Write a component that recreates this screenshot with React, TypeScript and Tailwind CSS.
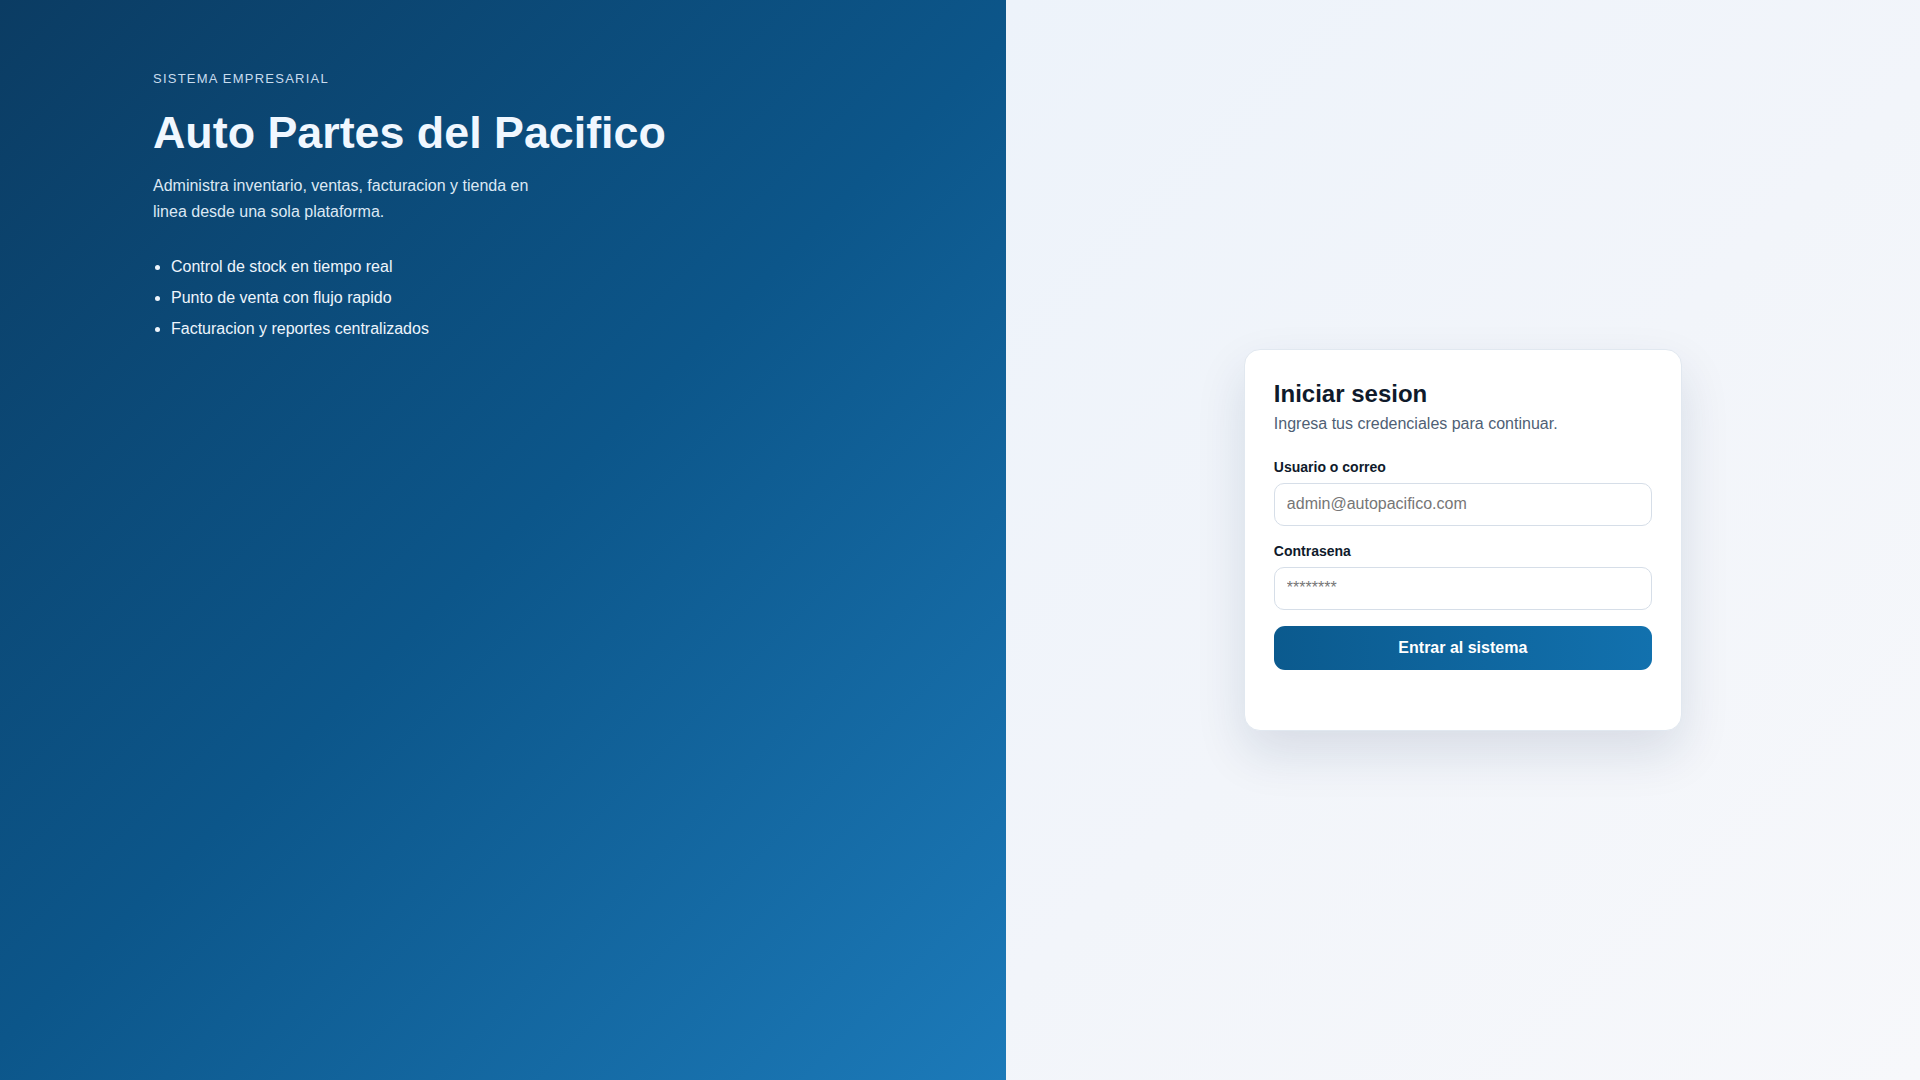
import React from "react";

export default function App() {
  return (
    <div
      className="grid grid-cols-[1.1fr_1fr] w-full h-[1080px] min-h-screen"
      style={{ fontFamily: '"Liberation Sans", Arial, sans-serif' }}
    >
      <section className="bg-[linear-gradient(135deg,#0b3c63_0%,#0c568a_50%,#1c7ab9_100%)] text-white pl-[153px] pr-12 pt-[71px]">
        <p className="text-[13px] leading-[16px] tracking-[0.095em] uppercase text-[#c9dcee]">
          Sistema empresarial
        </p>
        <h1 className="mt-[21px] text-[44.8px] leading-[1.1] font-bold text-[#f0f7ff]">
          Auto Partes del Pacifico
        </h1>
        <p className="mt-4 max-w-[390px] text-[16px] leading-[25.6px] text-[#dce8f4]">
          Administra inventario, ventas, facturacion y tienda en linea desde una sola plataforma.
        </p>
        <ul className="mt-[30px] pl-[18px] list-disc text-[16px] leading-[25.6px] text-[#eef5fc] space-y-[5px] marker:text-[#eef5fc]">
          <li>Control de stock en tiempo real</li>
          <li>Punto de venta con flujo rapido</li>
          <li>Facturacion y reportes centralizados</li>
        </ul>
      </section>
      <section className="bg-[linear-gradient(135deg,#edf3fa_0%,#f2f5fa_50%,#f7f8fb_100%)] flex items-center justify-center">
        <div className="w-[438px] bg-white border border-[#e1e8f0] rounded-[16px] px-[29px] pt-[30px] pb-[29px] shadow-[0_22px_50px_rgba(20,45,85,0.12)]">
          <h2 className="text-[24px] leading-[28.8px] font-bold text-[#0f1a2b]">Iniciar sesion</h2>
          <p className="mt-[3px] text-[16px] leading-6 text-[#4f5f75]">
            Ingresa tus credenciales para continuar.
          </p>
          <label className="block mt-[21px] text-[14px] leading-5 font-bold text-[#0f1a2b]">
            Usuario o correo
          </label>
          <input
            type="text"
            placeholder="admin@autopacifico.com"
            className="mt-[6px] block w-full h-[43px] px-3 rounded-[10px] border border-[#d6dee8] bg-white text-[16px] text-[#0f172a] placeholder:text-[#767676] outline-none"
          />
          <label className="block mt-[15px] text-[14px] leading-5 font-bold text-[#0f1a2b]">
            Contrasena
          </label>
          <input
            type="password"
            placeholder="********"
            className="mt-[6px] block w-full h-[43px] px-3 rounded-[10px] border border-[#d6dee8] bg-white text-[16px] text-[#0f172a] placeholder:text-[#767676] outline-none"
          />
          <button
            type="button"
            className="mt-4 w-full h-[44px] rounded-[11px] bg-[linear-gradient(90deg,#0b5a8e_0%,#1271ae_100%)] text-white text-[16px] font-bold"
          >
            Entrar al sistema
          </button>
          <div className="h-[31px]" />
        </div>
      </section>
    </div>
  );
}
